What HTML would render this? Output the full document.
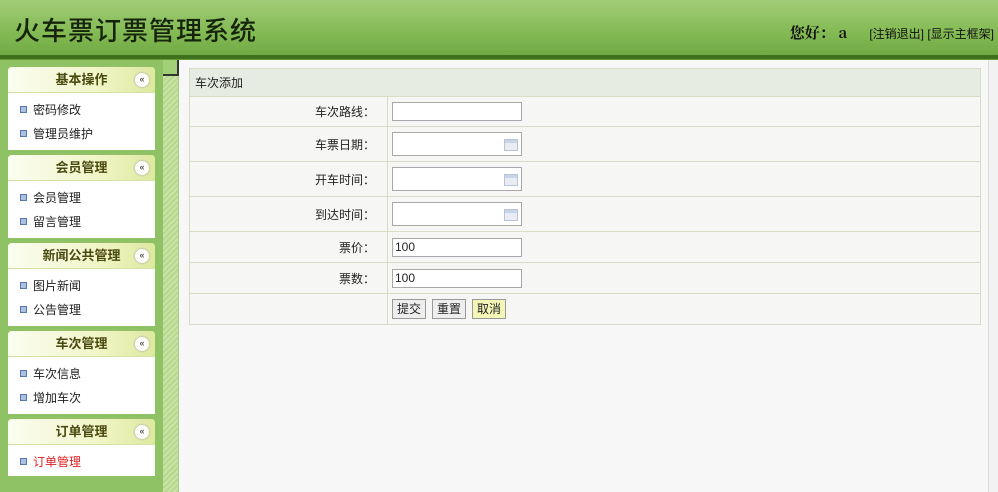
<!DOCTYPE html>
<html><head><meta charset="utf-8"><style>
*{margin:0;padding:0;box-sizing:border-box}
body{width:998px;height:492px;overflow:hidden;background:#f7f7f7;font-family:"Liberation Sans","Noto Sans CJK SC",sans-serif;font-size:12px;color:#222;position:relative}
#hd{position:absolute;left:0;top:0;width:998px;height:57px;background:linear-gradient(#a2cc78,#84bb55 55%,#6fa843)}
#hd .t{position:absolute;left:14px;top:11px;font-family:"Noto Sans CJK SC",sans-serif;font-weight:500;font-size:26px;color:#16240c;letter-spacing:1px}
#hd .r{position:absolute;right:4px;top:22px;font-size:12px;color:#111}
#hd .r b{font-family:"Noto Serif CJK SC",serif;font-size:15px;margin-right:22px}
#line{position:absolute;left:0;top:55px;width:998px;height:5px;background:#3d6f1c;border-bottom:1px solid #6a9a3a}
#side{position:absolute;left:0;top:60px;width:163px;height:432px;background:#8fc265}
#strip{position:absolute;left:163px;top:60px;width:16px;height:432px;background:repeating-linear-gradient(135deg,#c9e3a6 0 2px,#b7d88e 2px 4px);border-right:1px solid #a6cd7e}
#strip .b{position:absolute;left:0;top:0;width:16px;height:16px;background:#a3cf78;border-right:2px solid #333;border-bottom:2px solid #333}
.pn{position:absolute;left:8px;width:147px;background:#fff;border-radius:4px 4px 0 0}
.pn .h{height:26px;background:linear-gradient(90deg,#fbfdf1,#f1f5c8 60%,#dde99e);border-bottom:1px solid #cfe0a0;text-align:center;font-weight:bold;font-size:13px;color:#4a4a10;line-height:26px;border-radius:4px 4px 0 0;position:relative}
.pn .h i{position:absolute;right:6px;top:6px;width:14px;height:14px;border-radius:50%;background:#fff;box-shadow:0 0 2px #999;font-style:normal;font-size:9px;line-height:13px;color:#555}
.pn ul{list-style:none;padding:7px 0 0 12px}
.pn li{height:24px;line-height:20px;font-size:12px}
.pn li:before{content:"";display:inline-block;width:5px;height:5px;border:1px solid #5577aa;background:#aac0e0;margin-right:6px;vertical-align:1px}
#main{position:absolute;left:180px;top:60px;width:808px;height:432px;background:#f7f7f7}
#sb{position:absolute;left:988px;top:60px;width:10px;height:432px;background:#f2f2f2;border-left:1px solid #ddd}
table{position:absolute;left:189px;top:68px;width:792px;border-collapse:collapse;background:#f6f6f4}
td{border:1px solid #d9dcc4;font-size:12px}
tr.hh td{height:28px;background:#e7ece3;padding-left:5px}
td.l{width:198px;text-align:right;padding-right:12px}
td.v{padding-left:4px}
.in{display:inline-block;width:130px;height:19px;border:1px solid #a8a8a8;background:#fff;vertical-align:middle;position:relative;font-size:12px;line-height:17px;padding-left:2px}
.cal{height:24px}
.cal:after{content:"";position:absolute;right:3px;top:6px;width:12px;height:10px;background:linear-gradient(#c8d4e8 0 3px,#e9ecf2 3px);border:1px solid #b8c4d8}
.btn{display:inline-block;height:20px;border:1px solid #999;background:#eee;padding:0 4px;line-height:18px;margin-right:6px;font-size:12px}
</style></head><body>
<div id="hd"><div class="t">火车票订票管理系统</div><div class="r"><b>您好： a</b>[注销退出] [显示主框架]</div></div>
<div id="line"></div>
<div id="side"></div>
<div id="strip"><div class="b"></div></div>
<div class="pn" style="top:67px;height:83px"><div class="h">基本操作<i>«</i></div><ul><li>密码修改</li><li>管理员维护</li></ul></div>
<div class="pn" style="top:155px;height:83px"><div class="h">会员管理<i>«</i></div><ul><li>会员管理</li><li>留言管理</li></ul></div>
<div class="pn" style="top:243px;height:83px"><div class="h">新闻公共管理<i>«</i></div><ul><li>图片新闻</li><li>公告管理</li></ul></div>
<div class="pn" style="top:331px;height:83px"><div class="h">车次管理<i>«</i></div><ul><li>车次信息</li><li>增加车次</li></ul></div>
<div class="pn" style="top:419px;height:57px"><div class="h">订单管理<i>«</i></div><ul><li style="color:#e02020">订单管理</li></ul></div>
<div id="main"></div>
<div id="sb"></div>
<table>
<tr class="hh"><td colspan="2">车次添加</td></tr>
<tr style="height:30px"><td class="l">车次路线：</td><td class="v"><span class="in"></span></td></tr>
<tr style="height:35px"><td class="l">车票日期：</td><td class="v"><span class="in cal"></span></td></tr>
<tr style="height:35px"><td class="l">开车时间：</td><td class="v"><span class="in cal"></span></td></tr>
<tr style="height:35px"><td class="l">到达时间：</td><td class="v"><span class="in cal"></span></td></tr>
<tr style="height:31px"><td class="l">票价：</td><td class="v"><span class="in">100</span></td></tr>
<tr style="height:31px"><td class="l">票数：</td><td class="v"><span class="in">100</span></td></tr>
<tr style="height:31px"><td class="l"></td><td class="v"><span class="btn">提交</span><span class="btn">重置</span><span class="btn" style="background:#f4f6b8">取消</span></td></tr>
</table>
</body></html>
